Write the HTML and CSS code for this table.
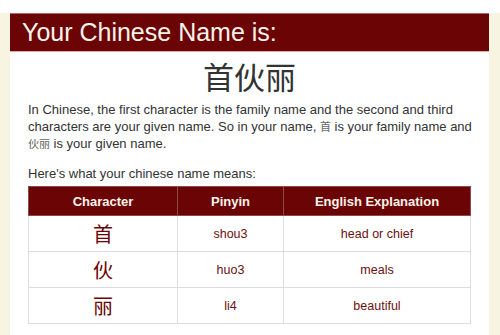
FILE: index.html
```html
<!DOCTYPE html>
<html lang="en">
<head>
    <title>Your Chinese Name</title>
    <meta charset="UTF-8">
    <link rel="stylesheet" href="styles.css">
</head>
<body>
    <div id="wrapper">
        <div id="content">
            <h1>Your Chinese Name is:</h1>
            <div class="main-text">
                <h2 class="chinese-name">首伙丽</h2>
                <p>In Chinese, the first character is the family name and the second and third
                characters are your given name. So in your name, <span class="cjk">首</span> is your family name and
                <span class="cjk">伙丽</span> is your given name.</p>
                <p class="means">Here's what your chinese name means:</p>

                <table class="meaning">
                    <tr>
                        <th class="col-char">Character</th>
                        <th class="col-pinyin">Pinyin</th>
                        <th>English Explanation</th>
                    </tr>
                    <tr>
                        <td class="hanzi">首</td>
                        <td>shou3</td>
                        <td>head or chief</td>
                    </tr>
                    <tr>
                        <td class="hanzi">伙</td>
                        <td>huo3</td>
                        <td>meals</td>
                    </tr>
                    <tr>
                        <td class="hanzi">丽</td>
                        <td>li4</td>
                        <td>beautiful</td>
                    </tr>
                </table>
            </div>
        </div>
    </div>
</body>
</html>
```

FILE: styles.css
```css
body {
    margin: 0;
    background-color: #fff;
    font-family: "Liberation Sans", Arial, "Noto Sans CJK SC", sans-serif;
    color: #333;
}
#wrapper {
    margin-top: 13px;
    padding: 0 11px 0 10px;
    background-color: #f7f4e2;
    height: 322px;
}
#content {
    background-color: #fff;
    height: 100%;
}
h1 {
    margin: 0;
    height: 37px;
    padding-left: 12px;
    background-color: #6b0505;
    border-top: 1px solid #a86a6a;
    border-bottom: 1px solid #e2a9a9;
    color: #fbf3ea;
    font-size: 25px;
    font-weight: normal;
    line-height: 36px;
}
.main-text {
    padding: 0 8px 0 18px;
}
.chinese-name {
    margin: 4px 0 5px;
    text-align: center;
    font-family: "Noto Sans CJK SC", sans-serif;
    font-size: 31px;
    font-weight: normal;
    line-height: 40px;
    color: #333;
    padding-right: 10px;
}
p {
    margin: 0 0 13px;
    font-size: 13px;
    line-height: 17px;
}
.cjk {
    font-family: "Noto Sans CJK SC", sans-serif;
    color: #666;
    font-size: 11px;
    line-height: 1;
}
p.means {
    margin-bottom: 4px;
}
.meaning {
    width: 443px;
    border-collapse: collapse;
    font-size: 12.5px;
    text-align: center;
}
.meaning th {
    height: 28px;
    padding: 0;
    background-color: #6b0505;
    color: #fbf3ea;
    font-size: 13px;
    font-weight: bold;
    border: 1px solid #8c4a4a;
}
.meaning td {
    height: 35px;
    padding: 0;
    border: 1px solid #ddd;
    color: #6b1010;
}
.col-char {
    width: 148px;
}
.col-pinyin {
    width: 105px;
}
.meaning td.hanzi {
    font-family: "Noto Sans CJK SC", sans-serif;
    font-size: 20px;
    color: #6b0505;
}
```
